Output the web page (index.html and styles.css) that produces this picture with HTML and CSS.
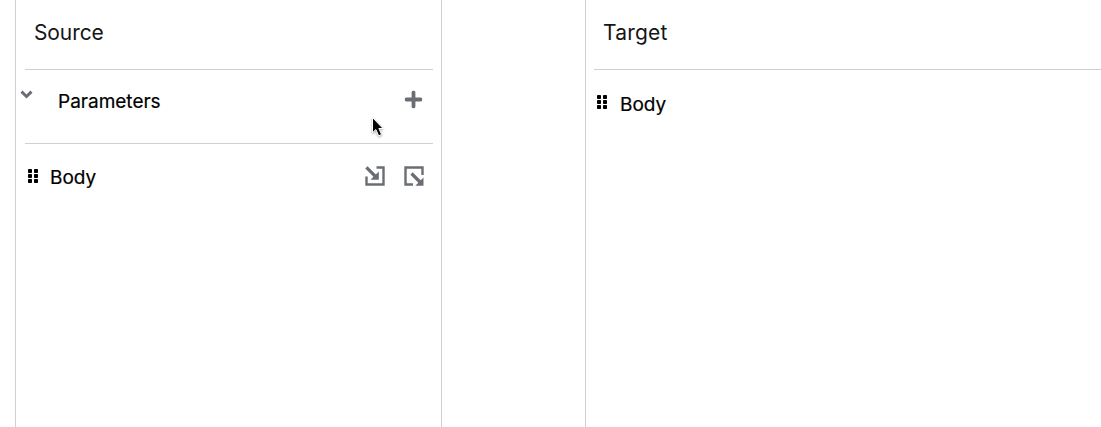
FILE: index.html
```html
<!DOCTYPE html>
<html lang="en">
<head>
<meta charset="utf-8">
<title>Data Mapper</title>
<link rel="stylesheet" href="styles.css">
</head>
<body>
<main class="mapper">
  <section class="panel source">
    <h2 class="title">Source</h2>
    <div class="row parameters">
      <svg class="chevron" viewBox="0 0 13 9"><path d="M1.5 1.7l5 4.8 5-4.8"/></svg>
      <span class="label params-label">Parameters</span>
      <svg class="plus" viewBox="0 0 18 18"><path d="M9 2v14M2 9h14"/></svg>
    </div>
    <div class="row body-row">
      <svg class="grip" viewBox="0 0 11 14"><g><rect width="4" height="4" rx=".8"/><rect x="6" width="4" height="4" rx=".8"/><rect y="5" width="4" height="4" rx=".8"/><rect x="6" y="5" width="4" height="4" rx=".8"/><rect y="10" width="4" height="4" rx=".8"/><rect x="6" y="10" width="4" height="4" rx=".8"/></g></svg>
      <span class="label">Body</span>
      <span class="actions">
        <svg class="action" viewBox="0 0 20 20"><path d="M11.5 1.5h7v17h-17v-8"/><path class="shaft" d="M1.4 1.4l9.6 9.6"/><path class="head" d="M13.8 5.5v8.3H5.5z"/></svg>
        <svg class="action" viewBox="0 0 20 20"><path d="M9 18.5H1.5v-17h17V9"/><path class="shaft" d="M7.5 7.5l9 9"/><path class="head" d="M19.5 11.5v8.2h-8.2z"/></svg>
      </span>
    </div>
  </section>
  <section class="panel target">
    <h2 class="title">Target</h2>
    <div class="row body-row">
      <svg class="grip" viewBox="0 0 11 14"><g><rect width="4" height="4" rx=".8"/><rect x="6" width="4" height="4" rx=".8"/><rect y="5" width="4" height="4" rx=".8"/><rect x="6" y="5" width="4" height="4" rx=".8"/><rect y="10" width="4" height="4" rx=".8"/><rect x="6" y="10" width="4" height="4" rx=".8"/></g></svg>
      <span class="label">Body</span>
    </div>
  </section>
</main>
<svg class="cursor" viewBox="0 0 14 21"><path d="M1.5 1.5v15.2l3.4-3.1 2.8 6.2 2.9-1.3-2.7-6H12z"/></svg>
</body>
</html>
```
FILE: styles.css
```css
* { box-sizing: border-box; }
body {
  margin: 0;
  background: #fff;
  color: #000;
  font-family: Inter, "Liberation Sans", sans-serif;
}
svg { display: block; flex: none; }
.mapper {
  display: grid;
  grid-template-columns: 427px 1fr;
  column-gap: 143px;
  height: 427px;
  padding-left: 15px;
  overflow: hidden;
}
.panel { border-left: 1px solid #d0d0d0; }
.source { padding: 0 8px 0 9px; border-right: 1px solid #d0d0d0; }
.target { padding-left: 8px; }
.title {
  height: 70px;
  margin: 0;
  padding: 18px 9px 0;
  border-bottom: 1px solid #d0d0d0;
  color: #151515;
  font-size: 21px;
  font-weight: 400;
  line-height: 30px;
}
.source .title { letter-spacing: -0.1px; }
.target .title { letter-spacing: 0.2px; }
.row { display: flex; align-items: flex-start; }
.label {
  font-size: 19px;
  font-weight: 400;
  line-height: 28px;
  letter-spacing: 0;
  -webkit-text-stroke: 0.2px #000;
}
.parameters {
  height: 74px;
  padding: 18px 10px 0 0;
  border-bottom: 1px solid #d0d0d0;
}
.chevron {
  width: 13px;
  height: 9px;
  margin: 2px 25px 0 -5px;
  fill: none;
  stroke: #6a6e73;
  stroke-width: 3;
}
.plus {
  width: 18px;
  height: 18px;
  margin: 3px 0 0 auto;
  fill: none;
  stroke: #6a6e73;
  stroke-width: 3.8;
  stroke-linecap: round;
  transform: translate(-0.5px, -0.5px);
}
.body-row { padding: 20px 9px 0 3px; }
.target .body-row { padding-top: 21px; }
.grip { width: 11px; height: 14px; margin: 5px 11px 0 0; }
.target .grip { margin: 4px 12px 0 0; }
.actions { display: flex; gap: 19px; margin: 1.5px 0.5px 0 auto; }
.action { width: 20px; height: 20px; fill: none; stroke: #6a6e73; stroke-width: 2.4; }
.action .shaft { stroke-width: 3.2; }
.action .head { fill: #6a6e73; stroke: none; }
.cursor {
  position: absolute;
  left: 371px;
  top: 116px;
  width: 14px;
  height: 21px;
  fill: #000;
  stroke: #fff;
  stroke-width: 1;
  filter: drop-shadow(0 1px 1px rgba(0, 0, 0, 0.35));
}
```
